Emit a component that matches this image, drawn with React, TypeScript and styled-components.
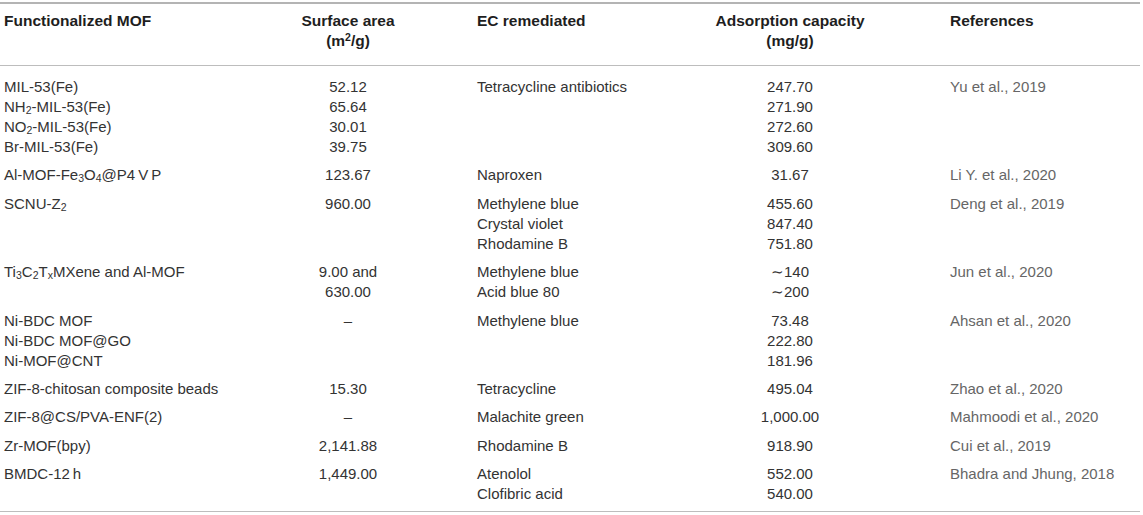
import React from "react";
import styled, { createGlobalStyle } from "styled-components";

const Global = createGlobalStyle`
  html, body { margin: 0; padding: 0; background: #ffffff; }
  body { font-family: "Liberation Sans", Arial, Helvetica, sans-serif; }
`;

const Page = styled.div`
  padding-top: 2px;
  width: 1140px;
`;

const Table = styled.table`
  width: 1140px;
  table-layout: fixed;
  border-collapse: collapse;
  font-size: 15px;
  line-height: 20px;
  color: #333333;
`;

type CellProps = { $align?: "left" | "center"; $pl?: number };

const Th = styled.th<CellProps>`
  font-weight: bold;
  font-size: 15.5px;
  color: #1e1e1e;
  vertical-align: top;
  text-align: ${(p) => p.$align ?? "left"};
  padding: 7px 0 14px ${(p) => p.$pl ?? 0}px;
  border-top: 2px solid #b4b4b4;
  border-bottom: 1px solid #bdbdbd;
  white-space: nowrap;
`;

const Td = styled.td<CellProps & { $ref?: boolean }>`
  vertical-align: top;
  text-align: ${(p) => p.$align ?? "left"};
  padding: 4px 0 4.4px ${(p) => p.$pl ?? 0}px;
  color: ${(p) => (p.$ref ? "#666666" : "#333333")};
  white-space: nowrap;
`;

const Row = styled.tr`
  &:first-child td { padding-top: 11px; }
  &:last-child td { padding-bottom: 7px; border-bottom: 1px solid #bdbdbd; }
`;

const Line = styled.div`
  display: block;
`;

const Sub = styled.sub`
  font-size: 10.5px;
  line-height: 0;
  vertical-align: -2px;
`;

const Sup = styled.sup`
  font-size: 10.5px;
  line-height: 0;
  vertical-align: 5px;
`;

type Group = {
  mof: React.ReactNode[];
  area: React.ReactNode[];
  ec: React.ReactNode[];
  cap: React.ReactNode[];
  ref: string;
};

const groups: Group[] = [
  {
    mof: [
      "MIL-53(Fe)",
      <>NH<Sub>2</Sub>-MIL-53(Fe)</>,
      <>NO<Sub>2</Sub>-MIL-53(Fe)</>,
      "Br-MIL-53(Fe)",
    ],
    area: ["52.12", "65.64", "30.01", "39.75"],
    ec: ["Tetracycline antibiotics"],
    cap: ["247.70", "271.90", "272.60", "309.60"],
    ref: "Yu et al., 2019",
  },
  {
    mof: [<>Al-MOF-Fe<Sub>3</Sub>O<Sub>4</Sub>@P4{"\u2009"}V{"\u2009"}P</>],
    area: ["123.67"],
    ec: ["Naproxen"],
    cap: ["31.67"],
    ref: "Li Y. et al., 2020",
  },
  {
    mof: [<>SCNU-Z<Sub>2</Sub></>],
    area: ["960.00"],
    ec: ["Methylene blue", "Crystal violet", "Rhodamine B"],
    cap: ["455.60", "847.40", "751.80"],
    ref: "Deng et al., 2019",
  },
  {
    mof: [<>Ti<Sub>3</Sub>C<Sub>2</Sub>T<Sub>x</Sub>MXene and Al-MOF</>],
    area: ["9.00 and", "630.00"],
    ec: ["Methylene blue", "Acid blue 80"],
    cap: ["\u223C140", "\u223C200"],
    ref: "Jun et al., 2020",
  },
  {
    mof: ["Ni-BDC MOF", "Ni-BDC MOF@GO", "Ni-MOF@CNT"],
    area: ["\u2013"],
    ec: ["Methylene blue"],
    cap: ["73.48", "222.80", "181.96"],
    ref: "Ahsan et al., 2020",
  },
  {
    mof: ["ZIF-8-chitosan composite beads"],
    area: ["15.30"],
    ec: ["Tetracycline"],
    cap: ["495.04"],
    ref: "Zhao et al., 2020",
  },
  {
    mof: ["ZIF-8@CS/PVA-ENF(2)"],
    area: ["\u2013"],
    ec: ["Malachite green"],
    cap: ["1,000.00"],
    ref: "Mahmoodi et al., 2020",
  },
  {
    mof: ["Zr-MOF(bpy)"],
    area: ["2,141.88"],
    ec: ["Rhodamine B"],
    cap: ["918.90"],
    ref: "Cui et al., 2019",
  },
  {
    mof: ["BMDC-12\u2009h"],
    area: ["1,449.00"],
    ec: ["Atenolol", "Clofibric acid"],
    cap: ["552.00", "540.00"],
    ref: "Bhadra and Jhung, 2018",
  },
];

const Lines = ({ items }: { items: React.ReactNode[] }) => (
  <>
    {items.map((it, i) => (
      <Line key={i}>{it}</Line>
    ))}
  </>
);

export default function App() {
  return (
    <Page>
      <Global />
      <Table>
        <colgroup>
          <col style={{ width: 250 }} />
          <col style={{ width: 196 }} />
          <col style={{ width: 254 }} />
          <col style={{ width: 180 }} />
          <col style={{ width: 260 }} />
        </colgroup>
        <thead>
          <tr>
            <Th $pl={4}>Functionalized MOF</Th>
            <Th $align="center">
              <Line>Surface area</Line>
              <Line>
                (m<Sup>2</Sup>/g)
              </Line>
            </Th>
            <Th $pl={31}>EC remediated</Th>
            <Th $align="center">
              <Line>Adsorption capacity</Line>
              <Line>(mg/g)</Line>
            </Th>
            <Th $pl={70}>References</Th>
          </tr>
        </thead>
        <tbody>
          {groups.map((g, i) => (
            <Row key={i}>
              <Td $pl={4}>
                <Lines items={g.mof} />
              </Td>
              <Td $align="center">
                <Lines items={g.area} />
              </Td>
              <Td $pl={31}>
                <Lines items={g.ec} />
              </Td>
              <Td $align="center">
                <Lines items={g.cap} />
              </Td>
              <Td $pl={70} $ref>
                {g.ref}
              </Td>
            </Row>
          ))}
        </tbody>
      </Table>
    </Page>
  );
}
